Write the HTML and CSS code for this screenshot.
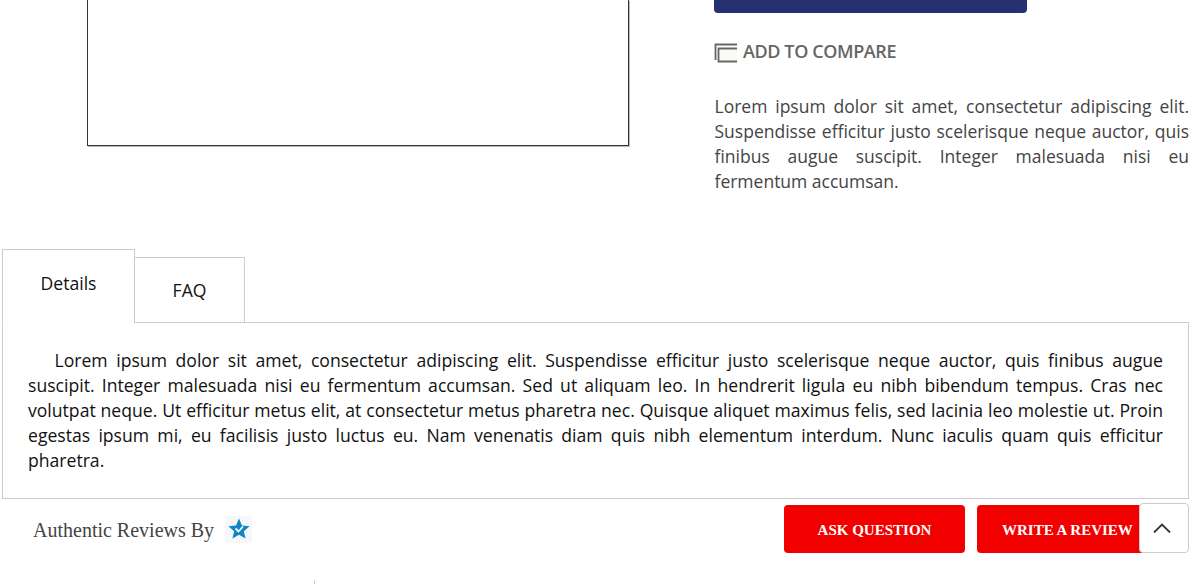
FILE: index.html
```html
<!DOCTYPE html>
<html lang="en">
<head>
<meta charset="utf-8">
<title>Product</title>
<link rel="stylesheet" href="styles.css">
</head>
<body>
<section class="product">
  <div class="gallery"><div class="image-box"></div></div>
  <div class="info">
    <div class="cart-btn"></div>
    <a class="compare">
      <svg class="compare-icon" width="24" height="20" viewBox="0 0 24 20"><path d="M1.500 17V1.500H23" fill="none" stroke="#666" stroke-width="1.800"/><path d="M23 5.500H4.500V18.500H23" fill="#fafaf6" stroke="#666" stroke-width="1.800"/></svg>
      <span>ADD TO COMPARE</span>
    </a>
    <p class="desc">Lorem ipsum dolor sit amet, consectetur adipiscing elit. Suspendisse efficitur justo scelerisque neque auctor, quis finibus augue suscipit. Integer malesuada nisi eu fermentum accumsan.</p>
  </div>
</section>
<section class="tabs">
  <div class="tab-head">
    <div class="tab tab-active">Details</div>
    <div class="tab tab-plain">FAQ</div>
  </div>
  <div class="tab-panel">
    <p class="panel-text">Lorem ipsum dolor sit amet, consectetur adipiscing elit. Suspendisse efficitur justo scelerisque neque auctor, quis finibus augue suscipit. Integer malesuada nisi eu fermentum accumsan. Sed ut aliquam leo. In hendrerit ligula eu nibh bibendum tempus. Cras nec volutpat neque. Ut efficitur metus elit, at consectetur metus pharetra nec. Quisque aliquet maximus felis, sed lacinia leo molestie ut. Proin egestas ipsum mi, eu facilisis justo luctus eu. Nam venenatis diam quis nibh elementum interdum. Nunc iaculis quam quis efficitur pharetra.</p>
  </div>
</section>
<section class="reviews">
  <div class="authentic">
    <span>Authentic Reviews By</span>
    <span class="badge">
      <svg width="24" height="24" viewBox="0 0 24 24"><path d="M12 1.500l3 7 7.600.7-5.800 5 1.800 7.400L12 17.700l-6.600 3.900 1.800-7.400-5.800-5L9 8.500z" fill="#0f86c6"/><path d="M8.500 11.500l3 3 4.500-5" fill="none" stroke="#fff" stroke-width="1.800"/></svg>
    </span>
  </div>
  <div class="actions">
    <a class="btn">ASK QUESTION</a>
    <a class="btn btn-review">WRITE A REVIEW</a>
  </div>
  <button class="to-top" aria-label="Back to top">
    <svg width="18" height="10" viewBox="0 0 18 10"><path d="M1 9.500L9 1.500l8 8" fill="none" stroke="#333" stroke-width="1.800"/></svg>
  </button>
</section>
<div class="stub"></div>
</body>
</html>
```
FILE: styles.css
```css
* { box-sizing: border-box; }
html, body { margin: 0; padding: 0; }
body {
  width: 1196px;
  height: 584px;
  overflow: hidden;
  background: #fff;
  font-family: "Open Sans", sans-serif;
  color: #000;
}
.product {
  display: flex;
  height: 249px;
  padding-left: 87px;
}
.gallery { width: 627px; }
.image-box {
  width: 542px;
  height: 146px;
  border: 1px solid #333;
  border-top: 0;
  box-shadow: 1px 1px 0 #bbb;
}
.info { width: 475px; }
.cart-btn {
  width: 313px;
  height: 13px;
  background: #263172;
  border-radius: 0 0 4px 4px;
}
.compare {
  display: flex;
  align-items: center;
  gap: 5px;
  margin-top: 25px;
  height: 26px;
  font-size: 18px;
  font-weight: 600;
  color: #666;
  letter-spacing: -0.4px;
}
.compare-icon { flex: none; margin-top: 3px; }
.desc {
  margin: 30px 0 0 0.5px;
  font-size: 17.5px;
  line-height: 25px;
  color: #444;
  text-align: justify;
}
.tabs { margin-left: 2px; width: 1187px; }
.tab-head {
  display: flex;
  align-items: flex-end;
  height: 74px;
  margin-bottom: -1px;
  position: relative;
  z-index: 1;
}
.tab {
  border: 1px solid #ccc;
  background: #fff;
  font-size: 17.6px;
  color: #111;
  text-align: center;
}
.tab-active {
  width: 133px;
  height: 74px;
  padding-top: 21px;
  line-height: 25px;
  border-bottom-color: #fff;
}
.tab-plain {
  width: 111px;
  height: 66px;
  margin-left: -1px;
  padding-top: 20px;
  line-height: 25px;
}
.tab-panel {
  border: 1px solid #ccc;
  height: 177px;
  padding: 25px 25px 0;
}
.panel-text {
  margin: 0;
  font-size: 17.6px;
  line-height: 25px;
  color: #111;
  text-align: justify;
  text-indent: 26.5px;
}
.reviews {
  position: relative;
  display: flex;
  justify-content: space-between;
  width: 1189px;
  padding: 6px 32px 0 33px;
}
.authentic {
  display: flex;
  align-items: center;
  gap: 11px;
  height: 50px;
  font-family: "Liberation Serif", serif;
  font-size: 20px;
  color: #444;
}
.badge {
  display: flex;
  align-items: center;
  justify-content: center;
  width: 27px;
  height: 27px;
  margin-top: -2px;
  background: #f6f7f8;
  border-radius: 3px;
}
.actions { display: flex; gap: 12px; }
.btn {
  display: flex;
  align-items: center;
  justify-content: center;
  width: 181px;
  height: 48px;
  padding-top: 2px;
  background: #f20000;
  border-radius: 4px;
  color: #fff;
  font-family: "Liberation Serif", serif;
  font-size: 15px;
  font-weight: 700;
}
.btn-review { width: 180px; justify-content: flex-start; padding-left: 25px; }
.to-top {
  position: absolute;
  right: 0;
  top: 4px;
  display: flex;
  align-items: center;
  justify-content: center;
  width: 50px;
  height: 50px;
  padding: 0 5px 0 0;
  background: #fff;
  border: 1px solid #ccc;
  border-radius: 4px;
}
.stub {
  position: absolute;
  left: 314px;
  top: 580px;
  width: 1px;
  height: 4px;
  background: #ccd3e0;
}
```
